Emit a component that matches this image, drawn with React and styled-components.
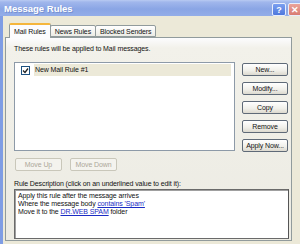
import React from "react";
import styled, { createGlobalStyle } from "styled-components";

const Global = createGlobalStyle`
  html, body { margin: 0; padding: 0; background: #ece9d8; }
  body { font-family: "Liberation Sans", Arial, sans-serif; }
`;

const Window = styled.div`
  width: 300px;
  height: 244px;
  overflow: hidden;
  display: flex;
  flex-direction: column;
  background: #ece9d8;
  color: #111;
  font-size: 7px;
  letter-spacing: -0.1px;
`;

const TitleBar = styled.div`
  height: 16px;
  flex: none;
  display: flex;
  align-items: center;
  padding-left: 4px;
  background: linear-gradient(#b9caf2 0, #a1b7ec 2px, #8aa5e5 9px, #93ade8 16px);
`;

const Title = styled.span`
  flex: 1;
  color: #fff;
  font-weight: bold;
  font-size: 9.5px;
  letter-spacing: 0;
  text-shadow: 1px 1px 0 #7690cf;
`;

const CapButton = styled.div`
  width: 12px;
  height: 11px;
  margin-right: 2px;
  margin-top: 3px;
  border: 1px solid #e8eefc;
  border-radius: 2px;
  display: flex;
  align-items: center;
  justify-content: center;
  color: #fff;
  font-weight: bold;
  font-size: 9px;
  background: ${(p) => (p.$close ? "linear-gradient(#eaa39a, #d97c72)" : "linear-gradient(#7b9ff0, #4f78dc)")};
  &:last-child { margin-right: -2px; }
`;

const Body = styled.div`
  flex: 1;
  display: flex;
  flex-direction: column;
  border-left: 3px solid #7f9de4;
  padding: 6px 8px 3px 2px;
`;

const TabStrip = styled.div`
  display: flex;
  align-items: flex-end;
  height: 15px;
  padding-left: 4px;
  position: relative;
  z-index: 1;
`;

const Tab = styled.div`
  height: ${(p) => (p.$active ? "15px" : "12px")};
  box-sizing: border-box;
  padding: 0 4px;
  display: flex;
  align-items: center;
  border: 1px solid #919b9c;
  border-bottom: ${(p) => (p.$active ? "none" : "1px solid #919b9c")};
  border-top: ${(p) => (p.$active ? "2px solid #f5b63c" : "1px solid #919b9c")};
  border-radius: 2px 2px 0 0;
  margin-left: ${(p) => (p.$active ? "0" : "-1px")};
  margin-bottom: ${(p) => (p.$active ? "-1px" : "0")};
  background: ${(p) => (p.$active ? "#fcfcfe" : "linear-gradient(#fff, #ecebe5)")};
  &:first-child { margin-left: 0; }
`;

const Panel = styled.div`
  flex: 1;
  border: 1px solid #919b9c;
  background: linear-gradient(#fcfcfe 0, #f2f1ea 10px, #ecebe3 100%);
  padding: 7px 3px 0 8px;
  display: flex;
  flex-direction: column;
`;

const Intro = styled.div`
  height: 8px;
  line-height: 8px;
  margin-bottom: 9px;
`;

const RulesArea = styled.div`
  display: flex;
  gap: 7px;
`;

const ListBox = styled.div`
  width: 222px;
  height: 89px;
  box-sizing: border-box;
  border: 1px solid #8d9aa8;
  background: #fff;
  padding: 1px 3px 0 2px;
`;

const RuleRow = styled.div`
  display: flex;
  align-items: center;
  height: 12px;
  gap: 4px;
  padding-left: 4px;
`;

const Check = styled.div`
  width: 7px;
  height: 7px;
  border: 1px solid #1c5180;
  background: #fff;
  display: flex;
  align-items: center;
  justify-content: center;
`;

const RuleName = styled.span`
  flex: 1;
  height: 12px;
  line-height: 12px;
  background: #ece9d8;
  padding-left: 1px;
`;

const ButtonCol = styled.div`
  display: flex;
  flex-direction: column;
  gap: 6px;
  padding-top: 1px;
`;

const Btn = styled.div`
  width: ${(p) => p.$w || 46}px;
  height: 13px;
  box-sizing: border-box;
  border: 1px solid ${(p) => (p.$disabled ? "#c9c7ba" : "#5f6a78")};
  border-radius: 2px;
  background: ${(p) => (p.$disabled ? "#f4f3ee" : "linear-gradient(#fff, #f0efe9 60%, #dcd9cf)")};
  color: ${(p) => (p.$disabled ? "#aca899" : "#111")};
  display: flex;
  align-items: center;
  justify-content: center;
`;

const MoveRow = styled.div`
  display: flex;
  gap: 8px;
  margin-top: 6px;
  padding-left: 1px;
`;

const DescLabel = styled.div`
  margin-top: 9px;
  height: 8px;
  line-height: 8px;
`;

const DescBox = styled.div`
  margin-top: 1px;
  width: 275px;
  height: 50px;
  box-sizing: border-box;
  border: 1px solid #6a6a6a;
  border-right-color: #555;
  box-shadow: inset 1px 1px 0 #a0a0a0;
  background: #fff;
  padding: 2px 3px;
  line-height: 8px;
`;

const Link = styled.span`
  color: #1a2bc4;
  text-decoration: underline;
`;

export default function App() {
  return (
    <Window>
      <Global />
      <TitleBar>
        <Title>Message Rules</Title>
        <CapButton>?</CapButton>
        <CapButton $close>✕</CapButton>
      </TitleBar>
      <Body>
        <TabStrip>
          <Tab $active>Mail Rules</Tab>
          <Tab>News Rules</Tab>
          <Tab>Blocked Senders</Tab>
        </TabStrip>
        <Panel>
          <Intro>These rules will be applied to Mail messages.</Intro>
          <RulesArea>
            <ListBox>
              <RuleRow>
                <Check>
                  <svg width="7" height="7" viewBox="0 0 7 7">
                    <path d="M1 3.5 L3 5.5 L6 1.5" stroke="#222" strokeWidth="1.3" fill="none" />
                  </svg>
                </Check>
                <RuleName>New Mail Rule #1</RuleName>
              </RuleRow>
            </ListBox>
            <ButtonCol>
              <Btn>New...</Btn>
              <Btn>Modify...</Btn>
              <Btn>Copy</Btn>
              <Btn>Remove</Btn>
              <Btn>Apply Now...</Btn>
            </ButtonCol>
          </RulesArea>
          <MoveRow>
            <Btn $disabled $w={47}>Move Up</Btn>
            <Btn $disabled $w={47}>Move Down</Btn>
          </MoveRow>
          <DescLabel>Rule Description (click on an underlined value to edit it):</DescLabel>
          <DescBox>
            <div>Apply this rule after the message arrives</div>
            <div>
              Where the message body <Link>contains 'Spam'</Link>
            </div>
            <div>
              Move it to the <Link>DR.WEB SPAM</Link> folder
            </div>
          </DescBox>
        </Panel>
      </Body>
    </Window>
  );
}
